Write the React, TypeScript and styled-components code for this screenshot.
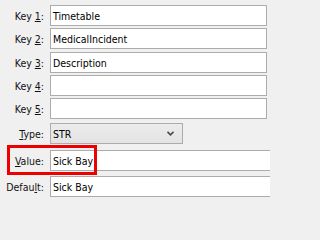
import React from "react";
import styled, { createGlobalStyle } from "styled-components";

const Global = createGlobalStyle`
  html, body { margin: 0; padding: 0; background: #f0f0f0; }
  body { width: 270px; height: 201px; overflow: hidden; }
`;

const Panel = styled.div`
  position: relative;
  width: 270px;
  height: 201px;
  overflow: hidden;
  background: #f0f0f0;
  font-family: "DejaVu Sans Condensed", "DejaVu Sans", sans-serif;
  font-size: 10.5px;
  color: #000;
  padding-top: 5px;
  box-sizing: border-box;
`;

const Row = styled.div<{ $mt: number }>`
  display: grid;
  grid-template-columns: 44px 1fr;
  column-gap: 6px;
  align-items: center;
  height: 21px;
  margin-top: ${(p) => p.$mt}px;
`;

const Label = styled.label`
  text-align: right;
  white-space: nowrap;
  color: #111;
`;

const U = styled.span`
  text-decoration: underline;
  text-underline-offset: 1px;
`;

const Field = styled.div<{ $open?: boolean }>`
  box-sizing: border-box;
  height: 21px;
  width: ${(p) => (p.$open ? "240px" : "217px")};
  background: #fff;
  border: 1px solid #acacac;
  padding: 0 0 0 2px;
  display: flex;
  align-items: center;
  white-space: nowrap;
`;

const Select = styled.div`
  box-sizing: border-box;
  height: 21px;
  width: 133px;
  background: linear-gradient(#ececec, #e3e3e3);
  border: 1px solid #acacac;
  padding: 0 8px 0 2px;
  display: flex;
  align-items: center;
  justify-content: space-between;
`;

const Highlight = styled.div`
  position: absolute;
  left: 7px;
  top: 145px;
  width: 90px;
  height: 30px;
  box-sizing: border-box;
  border: 3px solid #ee0000;
  pointer-events: none;
`;

const Chevron = () => (
  <svg width="7" height="5" viewBox="0 0 7 5">
    <path d="M0.5 0.8 L3.5 3.8 L6.5 0.8" fill="none" stroke="#4a4a4a" strokeWidth="1.6" />
  </svg>
);

export default function App() {
  const keys = [
    { n: "1", v: "Timetable", mt: 0 },
    { n: "2", v: "MedicalIncident", mt: 2 },
    { n: "3", v: "Description", mt: 3 },
    { n: "4", v: "", mt: 2 },
    { n: "5", v: "", mt: 2 },
  ];
  return (
    <Panel>
      <Global />
      {keys.map((k) => (
        <Row key={k.n} $mt={k.mt}>
          <Label>
            Key <U>{k.n}</U>:
          </Label>
          <Field>{k.v}</Field>
        </Row>
      ))}
      <Row $mt={4}>
        <Label>
          <U>T</U>ype:
        </Label>
        <Select>
          <span>STR</span>
          <Chevron />
        </Select>
      </Row>
      <Row $mt={6}>
        <Label>
          <U>V</U>alue:
        </Label>
        <Field $open>Sick Bay</Field>
      </Row>
      <Row $mt={5}>
        <Label>
          Defau<U>l</U>t:
        </Label>
        <Field $open>Sick Bay</Field>
      </Row>
      <Highlight />
    </Panel>
  );
}
